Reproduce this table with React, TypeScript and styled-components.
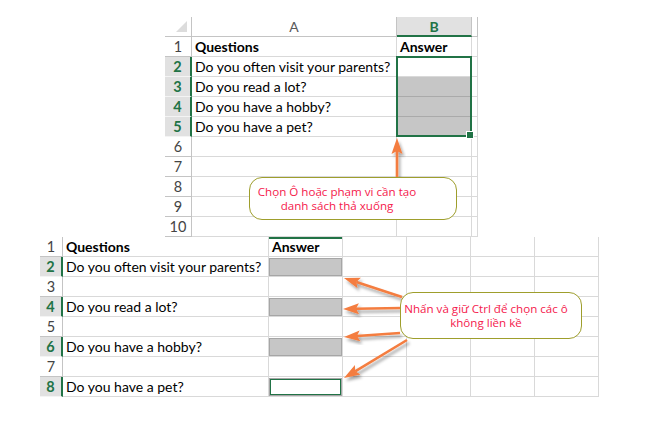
import React from "react";
import styled, { createGlobalStyle, css } from "styled-components";

const GlobalStyle = createGlobalStyle`
  html, body { margin: 0; padding: 0; background: #ffffff; }
  body { width: 647px; height: 429px; overflow: hidden; }
`;

const GREEN = "#217346";
const GRID = "#d9d9d9";
const HEADLINE = "#c4c4c4";

const Page = styled.div`
  position: relative;
  width: 647px;
  height: 429px;
  box-sizing: border-box;
  padding-top: 17px;
  display: flex;
  flex-direction: column;
  font-family: Lato, "Liberation Sans", sans-serif;
  color: #000;
  overflow: hidden;
`;

const Sheet = styled.div<{ $cols: string; $left: number }>`
  position: relative;
  margin-left: ${(p) => p.$left}px;
  display: grid;
  grid-template-columns: ${(p) => p.$cols};
  grid-auto-rows: 20px;
  width: max-content;
`;

const cellBase = css`
  box-sizing: border-box;
  position: relative;
  display: flex;
  align-items: center;
  overflow: hidden;
  white-space: nowrap;
`;

const Corner = styled.div`
  ${cellBase};
  border-right: 1px solid ${HEADLINE};
  border-bottom: 1px solid ${HEADLINE};
  &::after {
    content: "";
    position: absolute;
    right: 4px;
    bottom: 4px;
    width: 0;
    height: 0;
    border-left: 11px solid transparent;
    border-bottom: 11px solid #dcdcdc;
  }
`;

const ColHead = styled.div<{ $sel?: boolean }>`
  ${cellBase};
  justify-content: center;
  font-size: 14px;
  border-right: 1px solid ${HEADLINE};
  border-bottom: ${(p) => (p.$sel ? `2px solid ${GREEN}` : `1px solid ${HEADLINE}`)};
  background: ${(p) => (p.$sel ? "#e1e1e1" : "#ffffff")};
  color: ${(p) => (p.$sel ? GREEN : "#595959")};
  font-weight: ${(p) => (p.$sel ? 700 : 400)};
`;

const RowHead = styled.div<{ $sel?: boolean }>`
  ${cellBase};
  justify-content: center;
  font-size: 14.5px;
  border-bottom: 1px solid ${(p) => (p.$sel ? "#f4f4f4" : HEADLINE)};
  border-right: ${(p) => (p.$sel ? `2px solid ${GREEN}` : `1px solid ${HEADLINE}`)};
  background: ${(p) => (p.$sel ? "#e1e1e1" : "#ffffff")};
  color: ${(p) => (p.$sel ? GREEN : "#444444")};
  font-weight: ${(p) => (p.$sel ? 700 : 400)};
`;

const Cell = styled.div<{ $bold?: boolean; $gray?: boolean; $topGreen?: boolean; $pad?: boolean }>`
  ${cellBase};
  font-size: 14px;
  padding-left: ${(p) => (p.$pad ? 3 : 0)}px;
  font-weight: ${(p) => (p.$bold ? 700 : 400)};
  border-right: 1px solid ${GRID};
  border-bottom: 1px solid ${(p) => (p.$gray ? "#aaaaaa" : GRID)};
  background: ${(p) => (p.$gray ? "#c6c6c6" : "transparent")};
  ${(p) =>
    p.$topGreen &&
    css`
      box-shadow: inset 0 2px 0 ${GREEN};
    `}
`;

const AnswerBox = styled.div<{ $kind: "gray" | "outline" }>`
  box-sizing: border-box;
  align-self: stretch;
  width: 100%;
  margin: 1px 0 0 0;
  border: 1px solid #a6a6a6;
  background: ${(p) => (p.$kind === "gray" ? "#c6c6c6" : "#ffffff")};
  ${(p) =>
    p.$kind === "outline" &&
    css`
      box-shadow: inset 0 0 0 1px ${GREEN};
    `}
`;

const Selection = styled.div`
  position: absolute;
  left: 231px;
  top: 39px;
  width: 76px;
  height: 81px;
  box-sizing: border-box;
  border: 2px solid ${GREEN};
  pointer-events: none;
`;

const FillHandle = styled.div`
  position: absolute;
  right: -4px;
  bottom: -4px;
  width: 6px;
  height: 6px;
  background: ${GREEN};
  border: 1px solid #ffffff;
`;

const Callout = styled.div<{ $x: number; $y: number; $w: number; $h: number; $shift: number }>`
  position: absolute;
  left: ${(p) => p.$x}px;
  top: ${(p) => p.$y}px;
  width: ${(p) => p.$w}px;
  height: ${(p) => p.$h}px;
  box-sizing: border-box;
  padding-right: ${(p) => p.$shift}px;
  border: 1.5px solid #9e9e2c;
  border-radius: 13px;
  background: #ffffff;
  display: flex;
  flex-direction: column;
  align-items: center;
  justify-content: center;
  font-family: "Open Sans", "Noto Sans", sans-serif;
  font-size: 11.6px;
  line-height: 15px;
  color: #f5204c;
`;

const CalloutLine = styled.span`
  display: block;
  height: 14px;
  line-height: 14px;
`;

const ArrowLayer = styled.svg`
  position: absolute;
  left: 0;
  top: 0;
  width: 647px;
  height: 429px;
  pointer-events: none;
`;

type ArrowProps = { x1: number; y1: number; x2: number; y2: number };

const Arrow: React.FC<ArrowProps> = ({ x1, y1, x2, y2 }) => {
  const dx = x2 - x1;
  const dy = y2 - y1;
  const len = Math.hypot(dx, dy);
  const ux = dx / len;
  const uy = dy / len;
  const px = -uy;
  const py = ux;
  const L = 16;
  const W = 5.5;
  const notch = 3;
  const bx = x2 - ux * L;
  const by = y2 - uy * L;
  const nx = x2 - ux * (L - notch);
  const ny = y2 - uy * (L - notch);
  const pts = [
    [x2, y2],
    [bx + px * W, by + py * W],
    [nx, ny],
    [bx - px * W, by - py * W],
  ]
    .map((p) => p.map((v) => v.toFixed(1)).join(","))
    .join(" ");
  return (
    <g filter="url(#shadow)">
      <line x1={x1} y1={y1} x2={nx} y2={ny} stroke="#f47d3f" strokeWidth={2.6} />
      <polygon points={pts} fill="#f47d3f" />
    </g>
  );
};

type Row = { q: string; a: "none" | "gray" | "outline" | "head"; sel: boolean };

const topRows: Row[] = [
  { q: "Questions", a: "head", sel: false },
  { q: "Do you often visit your parents?", a: "none", sel: true },
  { q: "Do you read a lot?", a: "gray", sel: true },
  { q: "Do you have a hobby?", a: "gray", sel: true },
  { q: "Do you have a pet?", a: "gray", sel: true },
  { q: "", a: "none", sel: false },
  { q: "", a: "none", sel: false },
  { q: "", a: "none", sel: false },
  { q: "", a: "none", sel: false },
  { q: "", a: "none", sel: false },
];

const bottomRows: Row[] = [
  { q: "Questions", a: "head", sel: false },
  { q: "Do you often visit your parents?", a: "gray", sel: true },
  { q: "", a: "none", sel: false },
  { q: "Do you read a lot?", a: "gray", sel: true },
  { q: "", a: "none", sel: false },
  { q: "Do you have a hobby?", a: "gray", sel: true },
  { q: "", a: "none", sel: false },
  { q: "Do you have a pet?", a: "outline", sel: true },
];

const TopSheet: React.FC = () => (
  <Sheet $cols="27px 205px 75px 6px" $left={165}>
    <Corner />
    <ColHead>A</ColHead>
    <ColHead $sel>B</ColHead>
    <ColHead />
    {topRows.map((r, i) => (
      <React.Fragment key={i}>
        <RowHead $sel={r.sel}>{i + 1}</RowHead>
        <Cell $pad $bold={r.a === "head"}>{r.q}</Cell>
        <Cell $pad $bold={r.a === "head"} $gray={r.a === "gray"}>
          {r.a === "head" ? "Answer" : ""}
        </Cell>
        <Cell />
      </React.Fragment>
    ))}
    <Selection>
      <FillHandle />
    </Selection>
  </Sheet>
);

const BottomSheet: React.FC = () => (
  <Sheet $cols="23px 206px 74px 64px 64px 64px 64px" $left={40}>
    {bottomRows.map((r, i) => (
      <React.Fragment key={i}>
        <RowHead $sel={r.sel}>{i + 1}</RowHead>
        <Cell $pad $bold={r.a === "head"}>{r.q}</Cell>
        <Cell $pad={r.a === "head"} $bold={r.a === "head"} $topGreen={i === 0}>
          {r.a === "head" ? "Answer" : null}
          {r.a === "gray" || r.a === "outline" ? <AnswerBox $kind={r.a} /> : null}
        </Cell>
        <Cell />
        <Cell />
        <Cell />
        <Cell />
      </React.Fragment>
    ))}
  </Sheet>
);

export default function App() {
  return (
    <>
      <GlobalStyle />
      <Page>
        <TopSheet />
        <BottomSheet />
        <ArrowLayer viewBox="0 0 647 429">
          <defs>
            <filter id="shadow" x="-30%" y="-30%" width="160%" height="160%">
              <feDropShadow dx="2" dy="3" stdDeviation="1.6" floodColor="#000" floodOpacity="0.35" />
            </filter>
          </defs>
          <Arrow x1={397} y1={179} x2={397} y2={138} />
          <Arrow x1={402} y1={297} x2={344} y2={278} />
          <Arrow x1={402} y1={308} x2={343} y2={309} />
          <Arrow x1={400} y1={333} x2={344} y2={337} />
          <Arrow x1={407} y1={340} x2={344} y2={378} />
        </ArrowLayer>
        <Callout $x={249} $y={177} $w={208} $h={43} $shift={32}>
          <CalloutLine>Chọn Ô hoặc phạm vi cần tạo</CalloutLine>
          <CalloutLine>danh sách thả xuống</CalloutLine>
        </Callout>
        <Callout $x={400} $y={292} $w={182} $h={47} $shift={10}>
          <CalloutLine>Nhấn và giữ Ctrl để chọn các ô</CalloutLine>
          <CalloutLine>không liền kề</CalloutLine>
        </Callout>
      </Page>
    </>
  );
}
